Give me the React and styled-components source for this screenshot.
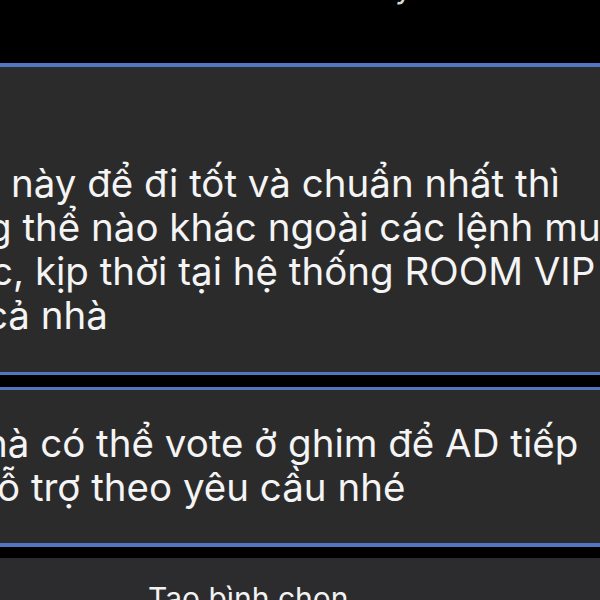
import React from 'react';
import styled, { createGlobalStyle } from 'styled-components';

const GlobalStyle = createGlobalStyle`
  html, body {
    margin: 0;
    padding: 0;
    background: #000;
    overflow: hidden;
  }
  body {
    font-family: Inter, "Noto Sans", "Liberation Sans", sans-serif;
    color: #fff;
  }
`;

const Screen = styled.div`
  width: 600px;
  height: 600px;
  overflow: hidden;
  background: #000;
  display: flex;
  flex-direction: column;
`;

const Stamp = styled.div`
  margin-top: -31px;
  height: 36px;
  line-height: 36px;
  font-size: 31px;
  text-align: center;
  color: #d8d8d8;
  white-space: nowrap;
  flex-shrink: 0;
`;

const Bubble = styled.div`
  margin-top: ${p => p.gap}px;
  background: #2b2b2c;
  border-top: ${p => p.topLine}px solid #5475bf;
  border-bottom: ${p => p.bottomLine}px solid #5475bf;
  padding: ${p => p.padTop}px 0 ${p => p.padBottom}px;
  overflow: hidden;
  flex-shrink: 0;
`;

const Line = styled.div`
  margin-left: ${p => p.shift}px;
  font-size: 38.5px;
  line-height: 44px;
  letter-spacing: 0px;
  white-space: nowrap;
  color: #f4f4f4;
`;

const Sheet = styled.div`
  margin-top: 11px;
  flex: 1;
  background: #2c2c2e;
  display: flex;
`;

const SheetButton = styled.div`
  padding: 22px 0 0 148px;
  font-size: 30px;
  line-height: 36px;
  color: #f2f2f2;
  white-space: nowrap;
`;

const first = [
  { text: 'này để đi tốt và chuẩn nhất thì', shift: 11 },
  { text: 'g thể nào khác ngoài các lệnh mua', shift: -12 },
  { text: 'c, kịp thời tại hệ thống ROOM VIP', shift: -9 },
  { text: 'cả nhà', shift: -14 },
];

const second = [
  { text: 'hà có thể vote ở ghim để AD tiếp', shift: -15 },
  { text: 'ỗ trợ theo yêu cầu nhé', shift: -3 },
];

export default function App() {
  return (
    <>
      <GlobalStyle />
      <Screen>
        <Stamp>09:38 Hôm nay</Stamp>
        <Bubble gap={58} topLine={4} bottomLine={3} padTop={94} padBottom={35}>
          {first.map(l => (
            <Line key={l.text} shift={l.shift}>{l.text}</Line>
          ))}
        </Bubble>
        <Bubble gap={12} topLine={3} bottomLine={4} padTop={31} padBottom={34}>
          {second.map(l => (
            <Line key={l.text} shift={l.shift}>{l.text}</Line>
          ))}
        </Bubble>
        <Sheet>
          <SheetButton>Tạo bình chọn</SheetButton>
        </Sheet>
      </Screen>
    </>
  );
}
